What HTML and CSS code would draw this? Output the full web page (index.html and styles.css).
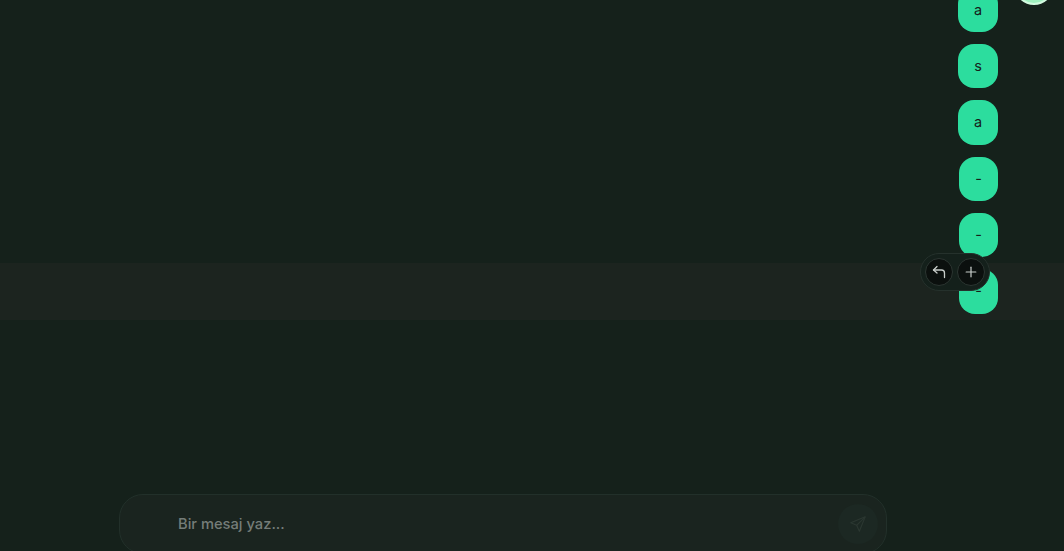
FILE: index.html
```html
<!DOCTYPE html>
<html lang="en">
<head>
  <meta charset="UTF-8">
  <title>Sohbet</title>
  <link rel="stylesheet" href="styles.css">
</head>
<body>
  <div class="chat">
    <div class="messages">
      <div class="row">
        <div class="bubble">a</div>
        <div class="gutter"><div class="avatar"></div></div>
      </div>
      <div class="row">
        <div class="bubble">s</div>
        <div class="gutter"></div>
      </div>
      <div class="row">
        <div class="bubble">a</div>
        <div class="gutter"></div>
      </div>
      <div class="row">
        <div class="bubble narrow">-</div>
        <div class="gutter"></div>
      </div>
      <div class="row">
        <div class="bubble narrow">-</div>
        <div class="gutter"></div>
      </div>
      <div class="row hovered">
        <div class="bubble narrow">-</div>
        <div class="gutter"></div>
        <div class="actions">
          <button class="action-button">
            <svg width="16" height="16" viewBox="0 0 16 16" fill="none" stroke="currentColor" stroke-width="1.3" stroke-linecap="round" stroke-linejoin="round">
              <path d="M6 2.500 2.500 6 6 9"/>
              <path d="M2.500 6H10.500a3 3 0 0 1 3 3v4.500"/>
            </svg>
          </button>
          <button class="action-button">
            <svg width="14" height="14" viewBox="0 0 16 16" fill="none" stroke="currentColor" stroke-width="1.4" stroke-linecap="round">
              <path d="M8 2.500v11"/>
              <path d="M2.500 8h11"/>
            </svg>
          </button>
        </div>
      </div>
    </div>

    <div class="composer-wrap">
      <div class="composer">
        <span class="placeholder">Bir mesaj yaz...</span>
        <div class="send">
          <svg width="18" height="18" viewBox="0 0 20 20" fill="none" stroke="currentColor" stroke-width="1.2" stroke-linejoin="round">
            <path d="M18 2 2 8.500l6.500 3L11.500 18z"/>
            <path d="M18 2 8.500 11.500"/>
          </svg>
        </div>
      </div>
    </div>
  </div>
</body>
</html>
```

FILE: styles.css
```css
html, body {
  height: 100%;
  margin: 0;
  background: #15211b;
  font-family: Inter, "Noto Sans", sans-serif;
  overflow: hidden;
}

.chat {
  height: 551px;
  display: flex;
  flex-direction: column;
}

.messages {
  height: 319.700px;
  overflow: hidden;
  display: flex;
  flex-direction: column;
  justify-content: flex-end;
  flex-shrink: 0;
}

.row {
  position: relative;
  display: flex;
  justify-content: flex-end;
  align-items: flex-start;
  padding: 6px 13px 6px 0;
  height: 44.330px;
  flex-shrink: 0;
}

.row.hovered {
  background: #1c241f;
}

.bubble {
  width: 40px;
  height: 44.330px;
  border-radius: 16px;
  background: #2cdd9e;
  color: #15211b;
  font-size: 14.500px;
  line-height: 43px;
  text-align: center;
}

.bubble.narrow {
  width: 39px;
}

.gutter {
  width: 34px;
  margin-left: 19px;
  flex-shrink: 0;
}

.avatar {
  width: 40px;
  height: 40px;
  margin: -23px 0 0 -3px;
  border-radius: 50%;
  background: #9ff0bf;
  box-sizing: border-box;
  border: 2px solid #d2fadf;
}

.actions {
  position: absolute;
  top: -10px;
  right: 74px;
  display: flex;
  align-items: center;
  gap: 4px;
  padding: 4px;
  box-sizing: border-box;
  height: 38px;
  border-radius: 19px;
  background: #14201b;
  border: 1px solid #25312c;
}

.action-button {
  width: 28px;
  height: 28px;
  padding: 0;
  border-radius: 50%;
  border: 1px solid #2b3531;
  background: #0b100e;
  color: #c8cdca;
  display: flex;
  align-items: center;
  justify-content: center;
}

.composer-wrap {
  flex: 1;
  display: flex;
  padding: 174.300px 0 0 119px;
  overflow: hidden;
  min-height: 0;
}

.composer {
  width: 768px;
  height: 60px;
  flex-shrink: 0;
  box-sizing: border-box;
  display: flex;
  align-items: center;
  justify-content: space-between;
  padding: 0 8px 0 58px;
  border: 1px solid #22302a;
  border-radius: 24px;
  background: #1a241f;
}

.placeholder {
  font-size: 14.700px;
  font-weight: 500;
  color: #757d79;
}

.send {
  width: 40px;
  height: 40px;
  border-radius: 50%;
  background: #1c2823;
  color: #2b3731;
  display: flex;
  align-items: center;
  justify-content: center;
}
```
